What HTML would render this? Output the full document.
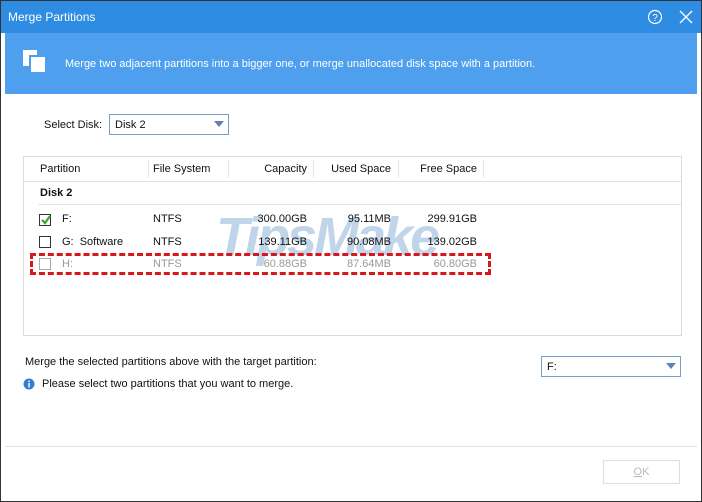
<!DOCTYPE html>
<html><head><style>
*{margin:0;padding:0;box-sizing:border-box}
body{width:702px;height:502px;background:#fff;font-family:"Liberation Sans",sans-serif;font-size:11px;color:#111;position:relative;overflow:hidden}
.a{position:absolute}
.win{left:0;top:0;width:702px;height:502px;border:1px solid #333}
.cb{width:12px;height:12px;border:1px solid #333;background:#fff}
</style></head><body>
<div class="a win"></div>
<div class="a" style="left:1px;top:1px;width:700px;height:32px;background:#2e8de2"></div>
<div class="a" style="left:8px;top:10px;color:#fff;font-size:12px">Merge Partitions</div>
<svg class="a" style="left:647px;top:9px" width="16" height="16"><circle cx="8" cy="8" r="6.5" fill="none" stroke="#fff" stroke-width="1.2"/><text x="8" y="12" font-size="10" fill="#fff" text-anchor="middle" font-family="Liberation Sans">?</text></svg>
<svg class="a" style="left:679px;top:10px" width="14" height="14"><path d="M1 1L13 13M13 1L1 13" stroke="#fff" stroke-width="1.3"/></svg>
<div class="a" style="left:5px;top:33px;width:692px;height:61px;background:#4e9fee"></div>
<div class="a" style="left:23px;top:50px;width:14px;height:16px;background:#fff"></div>
<div class="a" style="left:29px;top:55px;width:16px;height:17px;background:#fff;border:2px solid #4e9fee"></div>
<div class="a" style="left:31px;top:57px;width:14px;height:15px;background:#fff"></div>
<div class="a" style="left:65px;top:58px;color:#fff">Merge two adjacent partitions into a bigger one, or merge unallocated disk space with a partition.</div>
<div class="a" style="left:44px;top:119px">Select Disk:</div>
<div class="a" style="left:109px;top:114px;width:120px;height:21px;border:1px solid #7a9ec5;padding:4px 0 0 5px">Disk 2</div>
<svg class="a" style="left:214px;top:121px" width="10" height="7"><path d="M0 0H10L5 6Z" fill="#5d83b5"/></svg>
<div class="a" style="left:23px;top:156px;width:659px;height:180px;border:1px solid #dcdcdc"></div>
<div class="a" style="left:24px;top:181px;width:657px;height:1px;background:#e2e2e2"></div>
<div class="a" style="left:148px;top:160px;width:1px;height:18px;background:#e5e5e5"></div>
<div class="a" style="left:228px;top:160px;width:1px;height:18px;background:#e5e5e5"></div>
<div class="a" style="left:313px;top:160px;width:1px;height:18px;background:#e5e5e5"></div>
<div class="a" style="left:398px;top:160px;width:1px;height:18px;background:#e5e5e5"></div>
<div class="a" style="left:483px;top:160px;width:1px;height:18px;background:#e5e5e5"></div>
<div class="a" style="left:40px;top:163px">Partition</div>
<div class="a" style="left:153px;top:163px">File System</div>
<div class="a" style="left:228px;top:163px;width:79px;text-align:right">Capacity</div>
<div class="a" style="left:313px;top:163px;width:78px;text-align:right">Used Space</div>
<div class="a" style="left:398px;top:163px;width:79px;text-align:right">Free Space</div>
<div class="a" style="left:40px;top:187px;font-weight:bold">Disk 2</div>
<div class="a" style="left:38px;top:204px;width:643px;height:1px;background:#e5e5e5"></div>
<div class="a" style="left:216px;top:206px;font-size:54px;font-weight:bold;font-style:italic;color:#8fb4da;opacity:.55;letter-spacing:-3px">TipsMake</div>
<div class="a cb" style="left:39px;top:214px"></div>
<svg class="a" style="left:40px;top:214px" width="12" height="12"><path d="M2 6L5 9L10 2" stroke="#3aa53a" stroke-width="2.2" fill="none"/></svg>
<div class="a" style="left:62px;top:213px">F:</div><div class="a" style="left:153px;top:213px">NTFS</div>
<div class="a" style="left:228px;top:213px;width:79px;text-align:right">300.00GB</div>
<div class="a" style="left:313px;top:213px;width:78px;text-align:right">95.11MB</div>
<div class="a" style="left:398px;top:213px;width:79px;text-align:right">299.91GB</div>
<div class="a cb" style="left:39px;top:236px"></div>
<div class="a" style="left:62px;top:236px">G:&nbsp; Software</div><div class="a" style="left:153px;top:236px">NTFS</div>
<div class="a" style="left:228px;top:236px;width:79px;text-align:right">139.11GB</div>
<div class="a" style="left:313px;top:236px;width:78px;text-align:right">90.08MB</div>
<div class="a" style="left:398px;top:236px;width:79px;text-align:right">139.02GB</div>
<div class="a cb" style="left:39px;top:258px;border-color:#aaa"></div>
<div class="a" style="left:62px;top:258px;color:#999">H:</div><div class="a" style="left:153px;top:258px;color:#999">NTFS</div>
<div class="a" style="left:228px;top:258px;width:79px;text-align:right;color:#999">60.88GB</div>
<div class="a" style="left:313px;top:258px;width:78px;text-align:right;color:#999">87.64MB</div>
<div class="a" style="left:398px;top:258px;width:79px;text-align:right;color:#999">60.80GB</div>
<div class="a" style="left:30px;top:253px;width:461px;height:22px;border:3px dashed #d8161d"></div>
<div class="a" style="left:25px;top:356px">Merge the selected partitions above with the target partition:</div>
<div class="a" style="left:541px;top:356px;width:140px;height:21px;border:1px solid #7a9ec5;padding:4px 0 0 5px">F:</div>
<svg class="a" style="left:666px;top:363px" width="10" height="7"><path d="M0 0H10L5 6Z" fill="#5d83b5"/></svg>
<svg class="a" style="left:23px;top:378px" width="12" height="12"><circle cx="6" cy="6" r="5.5" fill="#2f7fd3"/><rect x="5.3" y="5" width="1.5" height="4.5" fill="#fff"/><rect x="5.3" y="2.5" width="1.5" height="1.5" fill="#fff"/></svg>
<div class="a" style="left:42px;top:378px">Please select two partitions that you want to merge.</div>
<div class="a" style="left:5px;top:446px;width:692px;height:1px;background:#e2e2e2"></div>
<div class="a" style="left:603px;top:460px;width:77px;height:24px;border:1px solid #ddd;color:#bbb;text-align:center;padding-top:5px"><u>O</u>K</div>
</body></html>
